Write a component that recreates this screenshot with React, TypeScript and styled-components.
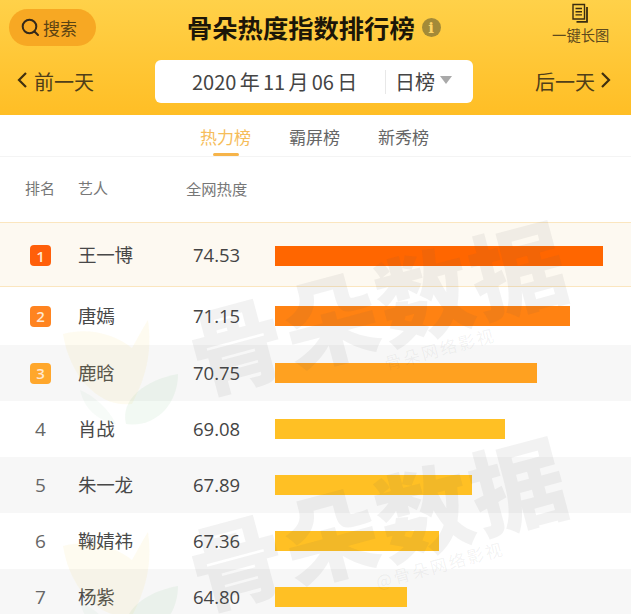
import React from 'react';
import styled, { createGlobalStyle } from 'styled-components';

const FONT = '"Noto Sans CJK SC", "Open Sans", "Liberation Sans", sans-serif';

const GlobalStyle = createGlobalStyle`
  html, body {
    margin: 0;
    padding: 0;
    background: #fff;
    font-family: ${FONT};
  }
`;

type Artist = { rank: number; name: string; score: string; width: number; color: string };

const ARTISTS: Artist[] = [
  { rank: 1, name: '王一博', score: '74.53', width: 328, color: '#ff6600' },
  { rank: 2, name: '唐嫣', score: '71.15', width: 295, color: '#ff8212' },
  { rank: 3, name: '鹿晗', score: '70.75', width: 262, color: '#ffa120' },
  { rank: 4, name: '肖战', score: '69.08', width: 230, color: '#ffc024' },
  { rank: 5, name: '朱一龙', score: '67.89', width: 197, color: '#ffc024' },
  { rank: 6, name: '鞠婧祎', score: '67.36', width: 164, color: '#ffc024' },
  { rank: 7, name: '杨紫', score: '64.80', width: 132, color: '#ffc024' },
];

const BADGE_COLORS: Record<number, string> = { 1: '#ff5f0a', 2: '#ff8420', 3: '#ffa72c' };

const LeafMark: React.FC<{ top: number }> = ({ top }) => (
  <LeafSvg $top={top} viewBox="0 0 120 120">
    <path d="M3 22C30 14 58 24 72 36C80 22 84 14 88 8C92 36 88 62 72 92C40 96 10 66 3 22Z" fill="#f7d470" opacity="0.1" />
    <path d="M66 112C60 88 84 68 118 62C118 92 96 116 66 112Z" fill="#7cc08a" opacity="0.1" />
    <path d="M20 78C34 84 48 96 56 112C36 108 24 96 20 78Z" fill="#7cc08a" opacity="0.06" />
  </LeafSvg>
);

const App: React.FC = () => (
  <Page>
    <GlobalStyle />
    <Header>
      <TopRow>
        <SearchPill>
          <svg width="21" height="21" viewBox="0 0 21 21" fill="none" stroke="#33281a" strokeWidth="2" strokeLinecap="round">
            <circle cx="9.5" cy="9.5" r="6.8" />
            <path d="M14.5 14.5L18 18" />
          </svg>
          <span>搜索</span>
        </SearchPill>
        <Title>骨朵热度指数排行榜</Title>
        <InfoIcon>i</InfoIcon>
        <LongImage>
          <svg width="20" height="21" viewBox="0 0 20 21" fill="none" stroke="#3a2c10" strokeWidth="1.4">
            <path d="M2 1.5H13.5V16H2Z" />
            <path d="M4.5 5.5H11M4.5 8.7H11M4.5 11.9H11" />
            <path d="M16 4V18.8H5.5" strokeWidth="1.8" />
          </svg>
          <span>一键长图</span>
        </LongImage>
      </TopRow>
      <DateRow>
        <PrevDay>
          <Chevron viewBox="0 0 12 18">
            <path d="M10 2L3 9L10 16" />
          </Chevron>
          前一天
        </PrevDay>
        <DateBox>
          <DateText>2020 年 11 月 06 日</DateText>
          <Divider />
          <RangeText>日榜</RangeText>
          <Caret />
        </DateBox>
        <NextDay>
          后一天
          <Chevron viewBox="0 0 12 18">
            <path d="M2 2L9 9L2 16" />
          </Chevron>
        </NextDay>
      </DateRow>
    </Header>

    <Tabs>
      <Tab $active>热力榜</Tab>
      <Tab>霸屏榜</Tab>
      <Tab>新秀榜</Tab>
    </Tabs>

    <TableHead>
      <RankHead>排名</RankHead>
      <NameHead>艺人</NameHead>
      <ScoreHead>全网热度</ScoreHead>
    </TableHead>

    {ARTISTS.map((artist) => (
      <Row key={artist.rank} $rank={artist.rank}>
        <RankCell>
          {BADGE_COLORS[artist.rank] ? (
            <Badge $color={BADGE_COLORS[artist.rank]}>{artist.rank}</Badge>
          ) : (
            artist.rank
          )}
        </RankCell>
        <NameCell>{artist.name}</NameCell>
        <ScoreCell>{artist.score}</ScoreCell>
        <Bar $color={artist.color} style={{ width: artist.width }} />
      </Row>
    ))}

    <Watermark $top={263}>
      <WatermarkTitle>骨朵数据</WatermarkTitle>
      <WatermarkSub>骨朵网络影视</WatermarkSub>
    </Watermark>
    <Watermark $top={479}>
      <WatermarkTitle>骨朵数据</WatermarkTitle>
      <WatermarkSub>@骨朵网络影视</WatermarkSub>
    </Watermark>
    <LeafMark top={312} />
    <LeafMark top={524} />
  </Page>
);

export default App;

const Page = styled.div`
  position: relative;
  width: 631px;
  height: 614px;
  overflow: hidden;
  background: #fff;
  color: #444;
`;

const Header = styled.header`
  height: 115px;
  padding: 0 0 0 9px;
  box-sizing: border-box;
  background: linear-gradient(180deg, #ffd149 0%, #ffbe25 100%);
`;

const TopRow = styled.div`
  display: flex;
  align-items: center;
  height: 60px;
`;

const SearchPill = styled.div`
  display: flex;
  align-items: center;
  gap: 2px;
  flex-shrink: 0;
  width: 87px;
  height: 37px;
  margin-top: -6px;
  padding-left: 11px;
  box-sizing: border-box;
  border-radius: 19px;
  background: #f7a823;
  color: #5b4313;
  font-size: 17px;
`;

const Title = styled.h1`
  flex-shrink: 0;
  margin: -6px 0 0 91px;
  color: #1c1608;
  font-size: 25.3px;
  font-weight: 700;
  line-height: 30px;
  white-space: nowrap;
`;

const InfoIcon = styled.span`
  display: flex;
  flex-shrink: 0;
  align-items: center;
  justify-content: center;
  width: 19px;
  height: 19px;
  margin: -5px 0 0 7px;
  border-radius: 50%;
  background: #a38a38;
  color: #ffd566;
  font-family: "DejaVu Serif", serif;
  font-size: 15px;
  font-weight: 700;
`;

const LongImage = styled.div`
  display: flex;
  flex-shrink: 0;
  flex-direction: column;
  align-items: center;
  width: 60px;
  margin: -15px 0 0 110px;
  color: #5e4a1d;
  font-size: 14.3px;
  line-height: 17px;
  white-space: nowrap;

  svg {
    margin-bottom: 2px;
  }
`;

const DateRow = styled.div`
  display: flex;
  align-items: flex-start;
`;

const DayLink = styled.div`
  display: flex;
  flex-shrink: 0;
  align-items: center;
  gap: 5px;
  height: 43px;
  box-sizing: border-box;
  color: #4f3e19;
  font-size: 20px;
  line-height: 43px;
`;

const PrevDay = styled(DayLink)`
  width: 146px;
  padding-left: 7px;
  gap: 6px;
`;

const NextDay = styled(DayLink)`
  width: 96px;
`;

const Chevron = styled.svg`
  width: 12px;
  height: 18px;
  margin-top: -3px;
  fill: none;
  stroke: #40300f;
  stroke-width: 2.2;
`;

const DateBox = styled.div`
  display: flex;
  flex-shrink: 0;
  align-items: center;
  width: 318px;
  height: 43px;
  margin-right: 62px;
  border-radius: 6px;
  background: #fff;
  color: #444;
  box-sizing: border-box;
  padding-left: 37px;
`;

const DateText = styled.span`
  width: 193px;
  font-size: 20px;
  word-spacing: -1.2px;
  white-space: nowrap;
`;

const Divider = styled.span`
  width: 1px;
  height: 24px;
  background: #e8e8e8;
`;

const RangeText = styled.span`
  margin-left: 9px;
  font-size: 20px;
`;

const Caret = styled.span`
  width: 0;
  height: 0;
  margin: -3px 0 0 5px;
  border-left: 6px solid transparent;
  border-right: 6px solid transparent;
  border-top: 8px solid #a9a9a9;
`;

const Tabs = styled.nav`
  display: flex;
  gap: 38px;
  height: 42px;
  padding-left: 200px;
  box-sizing: border-box;
  border-bottom: 1px solid #f4f4f4;
`;

const Tab = styled.div<{ $active?: boolean }>`
  position: relative;
  padding-top: 9px;
  color: ${({ $active }) => ($active ? '#f6bd5a' : '#666')};
  font-size: 17px;
  line-height: 25px;

  &::after {
    content: '';
    display: ${({ $active }) => ($active ? 'block' : 'none')};
    position: absolute;
    left: 13px;
    bottom: 0;
    width: 26px;
    height: 3px;
    border-radius: 2px;
    background: #f6b44a;
  }
`;

const TableHead = styled.div`
  display: flex;
  align-items: flex-start;
  height: 65px;
  padding-top: 20px;
  box-sizing: border-box;
  color: #777;
  font-size: 15px;
  line-height: 22px;
`;

const RankHead = styled.div`
  width: 78px;
  padding-left: 25px;
  box-sizing: border-box;
`;

const NameHead = styled.div`
  width: 108px;
`;

const ScoreHead = styled.div`
  font-size: 15.3px;
`;

const ROW_HEIGHT: Record<number, string> = { 1: '65px', 2: '58px' };

const Row = styled.div<{ $rank: number }>`
  display: flex;
  align-items: center;
  height: ${({ $rank }) => ROW_HEIGHT[$rank] ?? '56px'};
  padding-top: ${({ $rank }) => ($rank === 1 ? '2px' : '0')};
  box-sizing: border-box;
  background: ${({ $rank }) =>
    $rank === 1 ? '#fdf9f1' : $rank % 2 === 1 ? '#f7f7f7' : '#fff'};
  border-top: ${({ $rank }) => ($rank === 1 ? '1px solid #fbe6bf' : 'none')};
  border-bottom: ${({ $rank }) => ($rank === 1 ? '1px solid #fbe6bf' : 'none')};
`;

const RankCell = styled.div`
  display: flex;
  justify-content: center;
  width: 78px;
  padding-left: 3px;
  box-sizing: border-box;
  color: #666;
  font-size: 19px;
  font-family: "Open Sans", sans-serif;
`;

const Badge = styled.span<{ $color: string }>`
  display: flex;
  align-items: center;
  justify-content: center;
  width: 21px;
  height: 21px;
  border-radius: 4px;
  background: ${({ $color }) => $color};
  color: #ffe8d0;
  font-size: 15px;
  font-weight: 600;
`;

const NameCell = styled.div`
  width: 115px;
  margin-top: -3px;
  font-size: 18.5px;
  color: #484848;
  letter-spacing: -0.3px;
`;

const ScoreCell = styled.div`
  width: 82px;
  margin-top: -2px;
  font-family: "Open Sans", sans-serif;
  font-size: 18.5px;
  color: #444;
`;

const Bar = styled.div<{ $color: string }>`
  height: 20px;
  background: ${({ $color }) => $color};
`;

const Watermark = styled.div<{ $top: number }>`
  position: absolute;
  top: ${({ $top }) => $top}px;
  left: 171px;
  display: flex;
  flex-direction: column;
  align-items: center;
  width: 420px;
  transform: rotate(-15deg);
  pointer-events: none;
`;

const WatermarkTitle = styled.div`
  color: rgba(90, 90, 90, 0.08);
  font-size: 95px;
  font-weight: 900;
  line-height: 80px;
  letter-spacing: 2px;
  white-space: nowrap;
`;

const WatermarkSub = styled.div`
  margin: 9px 0 0 98px;
  color: rgba(90, 90, 90, 0.07);
  font-size: 17px;
  line-height: 22px;
  letter-spacing: 2px;
  white-space: nowrap;
`;

const LeafSvg = styled.svg<{ $top: number }>`
  position: absolute;
  top: ${({ $top }) => $top}px;
  left: 60px;
  width: 120px;
  height: 120px;
  pointer-events: none;
`;
